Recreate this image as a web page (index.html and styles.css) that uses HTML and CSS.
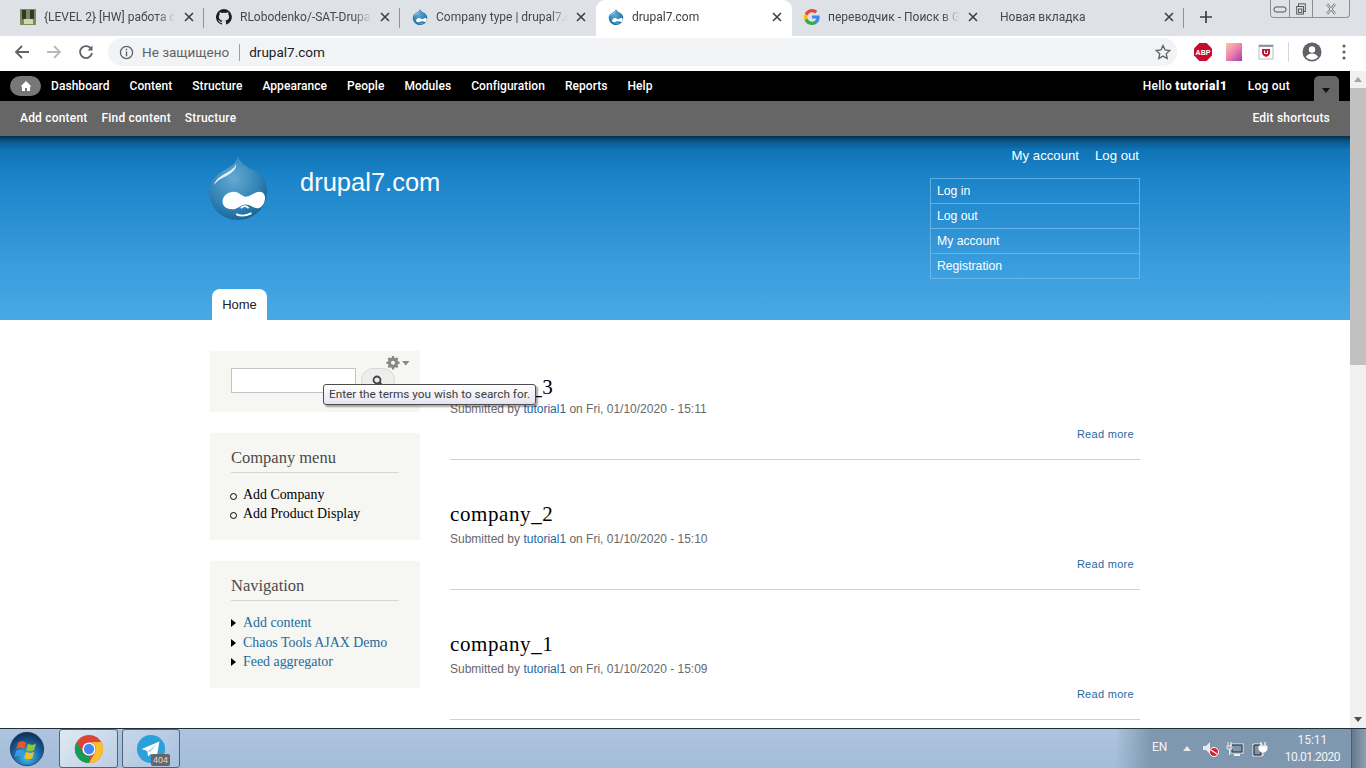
FILE: index.html
```html
<!DOCTYPE html>
<html lang="en">
<head>
<meta charset="utf-8">
<title>drupal7.com</title>
<link rel="stylesheet" href="styles.css">
</head>
<body>
<svg class="defs" width="0" height="0" aria-hidden="true">
  <defs>
    <radialGradient id="dropFill" cx="0.42" cy="0.35" r="0.72">
      <stop offset="0" stop-color="#64a9d2"/>
      <stop offset="0.65" stop-color="#2f80b4"/>
      <stop offset="1" stop-color="#14608f"/>
    </radialGradient>
    <symbol id="drop" viewBox="0 0 60 66">
      <path d="M30 0C29 8 20 12 12 17 4 22 0 29 0 36c0 17 13 30 30 30s30-13 30-30c0-8-4-15-11-20C40 12 32 8 30 0z" fill="url(#dropFill)"/>
      <path d="M28 8c-1 6-12 10-17 14-3 2-5 5-6 8 3-4 7-7 12-9 6-3 12-7 11-13z" fill="#e4f0f7"/>
      <path d="M14 47c0-6 6-10 12-10 5 0 8 5 12 5 5 0 9-5 14-5 4 0 6 3 6 6 0 6-4 11-8 11-4 0-7-4-12-4-5 0-8 5-14 5-6 0-10-3-10-8z" fill="#fff"/>
      <path d="M28 60c4 2 10 2 16-1M33 54c2-3 6-3 8 0" fill="none" stroke="#fff" stroke-width="1.800"/>
    </symbol>
    <symbol id="close" viewBox="0 0 10 10">
      <path d="M1 1l8 8M9 1L1 9" stroke="#3c4043" stroke-width="1.6" fill="none"/>
    </symbol>
  </defs>
</svg>

<header class="browser">
  <div class="tabstrip">
    <div class="tab">
      <svg class="favicon" viewBox="0 0 16 16"><rect width="16" height="16" fill="#7c8a5f"/><rect x="2" y="1" width="4" height="9" fill="#2d3a2a"/><rect x="10" y="1" width="4" height="9" fill="#2d3a2a"/><rect x="4" y="10" width="9" height="5" fill="#d8d3a8"/></svg>
      <span class="tab-label">{LEVEL 2} [HW] работа с</span>
      <svg class="tab-close"><use href="#close"/></svg>
    </div>
    <div class="tab">
      <svg class="favicon" viewBox="0 0 16 16"><path fill="#1b1f23" d="M8 0a8 8 0 0 0-2.5 15.6c.4.1.5-.2.5-.4v-1.4c-2.2.5-2.7-1-2.7-1-.4-.9-.9-1.200-.9-1.200-.7-.5.100-.5.100-.5.800.1 1.200.8 1.200.8.700 1.200 1.900.9 2.300.7.100-.5.300-.9.500-1.100-1.800-.2-3.600-.9-3.600-4 0-.9.300-1.600.800-2.100-.1-.2-.4-1 .1-2.100 0 0 .7-.2 2.200.8a7.600 7.600 0 0 1 4 0c1.500-1 2.200-.8 2.200-.8.400 1.100.200 1.900.100 2.100.5.600.8 1.300.8 2.100 0 3.100-1.900 3.700-3.700 3.900.3.300.6.800.6 1.500v2.200c0 .2.100.5.600.4A8 8 0 0 0 8 0z"/></svg>
      <span class="tab-label">RLobodenko/-SAT-Drupal</span>
      <svg class="tab-close"><use href="#close"/></svg>
    </div>
    <div class="tab">
      <svg class="favicon"><use href="#drop"/></svg>
      <span class="tab-label">Company type | drupal7.com</span>
      <svg class="tab-close"><use href="#close"/></svg>
    </div>
    <div class="tab tab-active">
      <svg class="favicon"><use href="#drop"/></svg>
      <span class="tab-label">drupal7.com</span>
      <svg class="tab-close"><use href="#close"/></svg>
    </div>
    <div class="tab tab-nosep">
      <svg class="favicon" viewBox="0 0 16 16">
        <path fill="#4285f4" d="M15.700 8.200c0-.6-.1-1.100-.2-1.600H8v3h4.300c-.2 1-.8 1.800-1.600 2.400v2h2.600c1.500-1.400 2.400-3.400 2.400-5.800z"/>
        <path fill="#34a853" d="M8 16c2.200 0 4-.7 5.300-2l-2.600-2c-.7.500-1.600.8-2.700.8-2.100 0-3.900-1.400-4.500-3.300H.6v2.100A8 8 0 0 0 8 16z"/>
        <path fill="#fbbc05" d="M3.500 9.500a4.800 4.800 0 0 1 0-3V4.400H.9a8 8 0 0 0 0 7.200z"/>
        <path fill="#ea4335" d="M8 3.200c1.200 0 2.200.4 3 1.200l2.300-2.300A8 8 0 0 0 .9 4.400l2.600 2.100C4.100 4.600 5.900 3.200 8 3.200z"/>
      </svg>
      <span class="tab-label">переводчик - Поиск в Google</span>
      <svg class="tab-close"><use href="#close"/></svg>
    </div>
    <div class="tab tab-plain">
      <span class="tab-label">Новая вкладка</span>
      <svg class="tab-close"><use href="#close"/></svg>
    </div>
    <svg class="newtab" viewBox="0 0 12 12"><path d="M6 0v12M0 6h12" stroke="#3c4043" stroke-width="1.700"/></svg>
    <div class="winctl">
      <span class="winbtn"><svg viewBox="0 0 14 10"><rect x="1" y="3" width="12" height="5" rx="2" fill="none" stroke="#555"/></svg></span>
      <span class="winbtn winbtn-mid"><svg viewBox="0 0 14 14"><rect x="4" y="1" width="8" height="9" fill="none" stroke="#444"/><rect x="2" y="4" width="8" height="9" fill="#dee1e6" stroke="#444"/><rect x="4" y="7" width="4" height="4" fill="none" stroke="#444"/></svg></span>
      <span class="winbtn winbtn-x"><svg viewBox="0 0 14 12"><path d="M3 1l8 10M11 1L3 11" stroke="#777" stroke-width="2.400"/><path d="M3 1l8 10M11 1L3 11" stroke="#eee" stroke-width="1"/></svg></span>
    </div>
  </div>
  <div class="navbar">
    <svg class="navicon" viewBox="0 0 16 16"><path d="M15 8H2M8 2L2 8l6 6" fill="none" stroke="#5f6368" stroke-width="1.800"/></svg>
    <svg class="navicon" viewBox="0 0 16 16"><path d="M1 8h13M8 2l6 6-6 6" fill="none" stroke="#b7babd" stroke-width="1.800"/></svg>
    <svg class="navicon" viewBox="0 0 16 16"><path d="M13.500 5.500A6 6 0 1 0 14 9" fill="none" stroke="#5f6368" stroke-width="1.800"/><path d="M14.500 1.500v5h-5z" fill="#5f6368"/></svg>
    <div class="omnibox">
      <svg class="info" viewBox="0 0 16 16"><circle cx="8" cy="8" r="6.500" fill="none" stroke="#5f6368" stroke-width="1.400"/><path d="M8 7v5M8 4v1.600" stroke="#5f6368" stroke-width="1.500"/></svg>
      <span class="insecure">Не защищено</span>
      <span class="omni-sep"></span>
      <span class="url">drupal7.com</span>
      <svg class="star" viewBox="0 0 16 16"><path d="M8 1.500l2 4.500 4.800.5-3.600 3.200 1 4.800L8 12.100l-4.200 2.400 1-4.800L1.200 6.500 6 6z" fill="none" stroke="#5f6368" stroke-width="1.300"/></svg>
    </div>
    <div class="ext-row">
      <span class="abp">ABP</span>
      <span class="ext-grad"></span>
      <svg class="ext-shield" viewBox="0 0 16 16"><rect x="1" y="1" width="14" height="14" fill="#fff" stroke="#b8bcc0"/><rect x="1" y="1" width="14" height="2" fill="#90969c"/><path d="M4 5h8v4c0 2-2 3-4 4-2-1-4-2-4-4z" fill="#c0162c"/><path d="M6.500 6.500v3h3v-3" fill="none" stroke="#fff"/></svg>
      <span class="ext-sep"></span>
      <svg class="avatar" viewBox="0 0 20 20"><circle cx="10" cy="10" r="9.500" fill="#5f6368"/><circle cx="10" cy="7.500" r="3.200" fill="#fff"/><path d="M3.800 15c1.500-2.500 3.800-3.500 6.200-3.500s4.700 1 6.200 3.500a8 8 0 0 1-12.400 0z" fill="#fff"/></svg>
      <svg class="kebab" viewBox="0 0 4 16"><circle cx="2" cy="2" r="1.600" fill="#5f6368"/><circle cx="2" cy="8" r="1.600" fill="#5f6368"/><circle cx="2" cy="14" r="1.600" fill="#5f6368"/></svg>
    </div>
  </div>
</header>

<div class="viewport">
  <div class="page">
    <nav class="admin-bar">
      <span class="home-pill"><svg viewBox="0 0 12 12"><path d="M6 1L0.500 6.500H2V11h3V8h2v3h3V6.500h1.500z" fill="#fff"/></svg></span>
      <ul class="admin-menu">
        <li>Dashboard</li><li>Content</li><li>Structure</li><li>Appearance</li><li>People</li><li>Modules</li><li>Configuration</li><li>Reports</li><li>Help</li>
      </ul>
      <span class="admin-user">Hello <b>tutorial1</b></span>
      <span class="admin-logout">Log out</span>
      <span class="admin-toggle"><i></i></span>
    </nav>
    <nav class="shortcut-bar">
      <ul class="shortcut-menu"><li>Add content</li><li>Find content</li><li>Structure</li></ul>
      <span class="edit-shortcuts">Edit shortcuts</span>
    </nav>

    <header class="site-header">
      <div class="wrap header-inner">
        <div class="brand">
          <svg class="logo"><use href="#drop"/></svg>
          <span class="site-name">drupal7.com</span>
        </div>
        <div class="header-right">
          <div class="secondary"><span>My account</span><span>Log out</span></div>
          <ul class="user-menu"><li>Log in</li><li>Log out</li><li>My account</li><li>Registration</li></ul>
        </div>
      </div>
      <div class="wrap tabs-row"><span class="home-tab">Home</span></div>
    </header>

    <div class="wrap columns">
      <aside class="sidebar">
        <section class="block block-search">
          <input class="search-input" type="text" aria-label="Search">
          <span class="search-btn"><svg viewBox="0 0 12 12"><circle cx="5" cy="5" r="3.500" fill="none" stroke="#444" stroke-width="1.800"/><path d="M7.500 7.500l3 3" stroke="#444" stroke-width="2"/></svg></span>
          <span class="gear"><svg viewBox="0 0 24 14"><path fill="#888" d="M6 0h2l.3 1.700 1.300.5L11 1.300l1.400 1.400-.9 1.400.5 1.300 1.700.3v2l-1.700.3-.5 1.300.9 1.400L11 12.100l-1.400-.9-1.300.5L8 13.400H6l-.3-1.700-1.300-.5-1.400.9L1.600 10.700l.9-1.400L2 8l-1.700-.3v-2L2 5.400l.5-1.300-.9-1.400L3 1.300l1.400.9 1.300-.5zM7 4.700a2 2 0 1 0 0 4 2 2 0 0 0 0-4z"/><path fill="#888" d="M16 5h7.500l-3.750 4.500z"/></svg></span>
          <div class="tooltip">Enter the terms you wish to search for.</div>
        </section>
        <section class="block">
          <h2 class="block-title">Company menu</h2>
          <ul class="block-list list-circle"><li>Add Company</li><li>Add Product Display</li></ul>
        </section>
        <section class="block">
          <h2 class="block-title">Navigation</h2>
          <ul class="block-list list-tri"><li>Add content</li><li>Chaos Tools AJAX Demo</li><li>Feed aggregator</li></ul>
        </section>
      </aside>
      <main class="content">
        <article class="post">
          <h2 class="post-title">company_3</h2>
          <p class="submitted">Submitted by <a class="author">tutorial1</a> on Fri, 01/10/2020 - 15:11</p>
          <p class="more"><a>Read more</a></p>
        </article>
        <article class="post">
          <h2 class="post-title">company_2</h2>
          <p class="submitted">Submitted by <a class="author">tutorial1</a> on Fri, 01/10/2020 - 15:10</p>
          <p class="more"><a>Read more</a></p>
        </article>
        <article class="post">
          <h2 class="post-title">company_1</h2>
          <p class="submitted">Submitted by <a class="author">tutorial1</a> on Fri, 01/10/2020 - 15:09</p>
          <p class="more"><a>Read more</a></p>
        </article>
      </main>
    </div>
  </div>
  <div class="scrollbar">
    <span class="sb-arrow"></span>
    <span class="sb-thumb"></span>
    <span class="sb-track"></span>
    <span class="sb-arrow sb-arrow-down"></span>
  </div>
</div>

<footer class="taskbar">
  <div class="orb">
    <svg viewBox="0 0 40 40">
      <defs><radialGradient id="orbFill" cx="0.5" cy="0.75" r="0.7"><stop offset="0" stop-color="#3fc4ee"/><stop offset="0.6" stop-color="#1a5f9e"/><stop offset="1" stop-color="#10335a"/></radialGradient></defs>
      <circle cx="20" cy="20" r="18.500" fill="url(#orbFill)" stroke="#24405e"/>
      <path d="M10 13c3-2 6-2 9 0l-2 7c-3-2-6-2-9 0z" fill="#e8562a"/>
      <path d="M21 14c3 2 6 2 9 0l-2 7c-3 2-6 2-9 0z" fill="#8cc63e"/>
      <path d="M8 22c3-2 6-2 9 0l-2 7c-3-2-6-2-9 0z" fill="#3a9be0"/>
      <path d="M19 23c3 2 6 2 9 0l-2 7c-3 2-6 2-9 0z" fill="#f7bd1d"/>
    </svg>
  </div>
  <div class="task-btn">
    <svg viewBox="0 0 32 32">
      <circle cx="16" cy="16" r="15" fill="#db4437"/>
      <path d="M16 31a15 15 0 0 1-13-22.500L9.500 20A7.500 7.500 0 0 0 16 23.500z" fill="#0f9d58"/>
      <path d="M16 8.500h13A15 15 0 0 1 16 31l6.500-11.500A7.500 7.500 0 0 0 16 8.500z" fill="#fbc02d"/>
      <circle cx="16" cy="16" r="7" fill="#fff"/><circle cx="16" cy="16" r="5.500" fill="#4285f4"/>
    </svg>
  </div>
  <div class="task-btn task-btn-tg">
    <svg viewBox="0 0 32 32"><circle cx="16" cy="16" r="15" fill="#2aa1da"/><path d="M6 16l19-8-3 17-6-4-3 3-1-6z" fill="#fff"/><path d="M12 18l10-7-7 9z" fill="#c8daea"/></svg>
    <span class="badge">404</span>
  </div>
  <div class="tray">
    <span class="lang">EN</span>
    <span class="tray-up"></span>
    <svg class="tray-icon" viewBox="0 0 18 16"><path d="M1 5h3l4-4v12l-4-4H1z" fill="#e8e8e8"/><circle cx="12" cy="11" r="4.500" fill="#d8202a" stroke="#fff"/><path d="M9 9l6 4" stroke="#fff" stroke-width="1.300"/></svg>
    <svg class="tray-icon" viewBox="0 0 18 16"><rect x="5" y="3" width="12" height="9" fill="#8297ac" stroke="#f4f4f4"/><rect x="6" y="4" width="10" height="7" fill="none" stroke="#1f2d3b"/><path d="M8 14h6" stroke="#eee" stroke-width="2"/><path d="M2 1v4M5 1v4M1 5h5v3H1zM3.500 8v6" stroke="#eee" fill="none"/></svg>
    <svg class="tray-icon" viewBox="0 0 18 16"><path d="M3 3h9v12H3z" fill="#7e94aa" stroke="#f0f0f0"/><path d="M4 4h7v10H4z" fill="none" stroke="#222"/><path d="M11 1v4M15 1v4" stroke="#eee" stroke-width="1.400"/><path d="M9 5h8v4l-2 2h-4l-2-2zM13 11v4" stroke="#eee" fill="#fff"/></svg>
    <div class="clock"><span>15:11</span><span>10.01.2020</span></div>
    <span class="show-desktop"></span>
  </div>
</footer>
</body>
</html>
```
FILE: styles.css
```css
* { box-sizing: border-box; }
html, body { margin: 0; padding: 0; height: 100%; overflow: hidden; }
body { display: flex; flex-direction: column; height: 768px; width: 1366px; font-family: "Liberation Sans", Arial, sans-serif; background: #fff; }
.defs { position: absolute; }
ul { list-style: none; margin: 0; padding: 0; }
h2, p { margin: 0; font-weight: normal; }

/* browser chrome */
.browser { flex: none; height: 71px; display: flex; flex-direction: column; }
.tabstrip { height: 36px; background: #dee1e6; display: flex; padding-left: 8px; align-items: stretch; position: relative; }
.tab { width: 196px; display: flex; align-items: center; padding: 0 10px 2px 12px; font: 12px Roboto, "Noto Sans", sans-serif; color: #45484c; position: relative; }
.tab::after { content: ""; position: absolute; right: 0; top: 8px; height: 20px; width: 1px; background: #8f9398; }
.tab-active { background: #fff; border-radius: 9px 9px 0 0; color: #3c4043; }
.tab-active::after, .tab-nosep::after { display: none; }
.tab:nth-child(3)::after { display: none; }
.favicon { width: 16px; height: 16px; flex: none; margin-right: 8px; }
.tab-label { flex: 1; white-space: nowrap; overflow: hidden; -webkit-mask-image: linear-gradient(to right, #000 85%, transparent 98%); mask-image: linear-gradient(to right, #000 85%, transparent 98%); }
.tab-close { width: 10px; height: 10px; flex: none; margin-left: 6px; }
.newtab { width: 12px; height: 12px; margin: 11px 0 0 16px; flex: none; }
.winctl { position: absolute; left: 1270px; top: 0; width: 80px; height: 18px; display: flex; border: 1px solid #8b8e92; border-top: 0; border-radius: 0 0 4px 4px; background: #dfe2e6; }
.winbtn { flex: 1; display: flex; align-items: center; justify-content: center; }
.winbtn svg { width: 14px; height: 12px; }
.winbtn-mid { flex: 0 0 24px; border-left: 1px solid #8b8e92; border-right: 1px solid #8b8e92; }
.winbtn-x { flex: 0 0 36px; }

.navbar { height: 35px; background: #fff; display: flex; align-items: center; padding: 0 0 3px 14px; }
.navicon { width: 16px; height: 16px; flex: none; margin-right: 16px; }
.omnibox { margin-left: -2px; width: 1069px; height: 28px; background: #f1f3f4; border-radius: 14px; display: flex; align-items: center; padding: 0 6px 0 11px; font: 13.500px Roboto, "Noto Sans", sans-serif; }
.info { width: 15px; height: 15px; flex: none; }
.insecure { color: #5f6368; margin-left: 8px; }
.omni-sep { width: 1px; height: 17px; background: #9aa0a6; margin: 0 9px 0 10px; }
.url { color: #202124; flex: 1; }
.star { width: 16px; height: 16px; margin-right: 0; flex: none; }
.ext-row { display: flex; align-items: center; margin-left: 17px; }
.abp { width: 18px; height: 18px; background: #c70d2c; color: #fff; font: bold 7px "Liberation Sans", sans-serif; display: flex; align-items: center; justify-content: center; clip-path: polygon(30% 0, 70% 0, 100% 30%, 100% 70%, 70% 100%, 30% 100%, 0 70%, 0 30%); }
.ext-grad { width: 16px; height: 18px; margin-left: 14px; background: linear-gradient(135deg, #f8c9a0 0%, #ee80b0 50%, #a03fb0 100%); }
.ext-shield { width: 16px; height: 18px; margin-left: 16px; }
.ext-sep { width: 1px; height: 20px; background: #d5d7da; margin: 0 13px 0 14px; }
.avatar { width: 20px; height: 20px; }
.kebab { width: 4px; height: 16px; margin-left: 20px; }

/* viewport */
.viewport { flex: 1; min-height: 0; display: flex; }
.page { flex: 1; min-width: 0; overflow: hidden; }
.scrollbar { flex: 0 0 16px; background: #f1f1f1; display: flex; flex-direction: column; }
.sb-arrow { flex: 0 0 17px; position: relative; }
.sb-arrow::after { content: ""; position: absolute; left: 4px; top: 6px; border-left: 4px solid transparent; border-right: 4px solid transparent; border-bottom: 5px solid #a3a3a3; }
.sb-arrow-down::after { top: 6px; border-bottom: 0; border-top: 5px solid #505050; }
.sb-thumb { flex: 0 0 277px; background: #c1c1c1; }
.sb-track { flex: 1; }

/* admin */
.admin-bar { height: 30px; background: #000; display: flex; align-items: center; color: #fff; font: 500 12px Roboto, "Noto Sans", sans-serif; letter-spacing: .05px; padding: 0 0 1px 10px; }
.home-pill { width: 31px; height: 20px; border-radius: 10px; background: #777; display: flex; align-items: center; justify-content: center; margin-right: 10px; }
.home-pill svg { width: 12px; height: 12px; }
.admin-menu { display: flex; gap: 20px; flex: 1; }
.admin-user b { font-weight: 900; letter-spacing: .7px; }
.admin-user { letter-spacing: .3px; }
.admin-logout { margin-left: 20px; letter-spacing: .25px; }
.admin-toggle { width: 25px; height: 25px; background: #666; border-radius: 5px 5px 0 0; margin: 5px 11px -1px 24px; align-self: stretch; position: relative; }
.admin-toggle i { position: absolute; left: 8px; top: 12px; border-left: 4px solid transparent; border-right: 4px solid transparent; border-top: 5px solid #111; }
.shortcut-bar { height: 35px; background: #666; display: flex; align-items: center; justify-content: space-between; color: #fff; font: 500 12px Roboto, "Noto Sans", sans-serif; letter-spacing: .2px; padding: 0 20px 1px; }
.shortcut-menu { display: flex; gap: 14px; }

/* header */
.site-header { height: 184px; background: linear-gradient(to bottom, #03304d 0, #0a5a90 6px, #0f74b6 14px, #1b83c9 40px, #3a9ddd 130px, #48a9e6 184px); display: flex; flex-direction: column; }
.wrap { width: 930px; margin-left: 210px; }
.header-inner { flex: 1; display: flex; justify-content: space-between; }
.brand { display: flex; align-items: flex-start; padding-top: 20px; }
.logo { width: 58px; height: 64px; flex: none; margin-left: -1px; }
.site-name { color: #fff; font-size: 25.500px; margin: 12px 0 0 33px; line-height: 28px; }
.header-right { width: 210px; color: #fff; }
.secondary { display: flex; justify-content: flex-end; gap: 16px; font-size: 13.200px; height: 42px; padding: 12px 1px 0 0; line-height: 16px; }
.user-menu { border: 1px solid rgba(130, 195, 240, .65); font-size: 12.200px; }
.user-menu li { height: 25px; line-height: 24px; padding-left: 6px; border-bottom: 1px solid rgba(130, 195, 240, .65); }
.user-menu li:last-child { height: 24px; border-bottom: 0; }
.tabs-row { height: 31px; flex: none; padding-left: 2px; }
.home-tab { display: block; width: 55px; height: 31px; background: #fff; border-radius: 8px 8px 0 0; font-size: 13px; line-height: 31px; text-align: center; color: #222; }

/* columns */
.columns { display: flex; gap: 30px; padding-top: 31px; }
.sidebar { width: 210px; flex: none; display: flex; flex-direction: column; gap: 21px; }
.block { background: #f6f6f2; padding: 15px 21px 16.900px; position: relative; font-family: "Liberation Serif", serif; }
.block-search { height: 61px; padding: 17px 0 0 21px; display: flex; gap: 5px; }
.search-input { width: 125px; height: 25px; border: 1px solid #c4c4c4; background: #fff; margin: 0; padding: 0; }
.search-btn { width: 34px; height: 25px; border-radius: 12px; border: 1px solid #d8d8d8; background: #ededed; display: flex; align-items: center; justify-content: center; }
.search-btn svg { width: 12px; height: 12px; }
.gear { position: absolute; left: 176px; top: 5px; width: 24px; height: 14px; display: block; }
.gear svg { width: 24px; height: 14px; display: block; }
.tooltip { position: absolute; z-index: 5; left: 113px; top: 33px; height: 21px; padding: 0 5px; border: 1px solid #4d4d4d; border-radius: 3px; background: linear-gradient(#fff, #e4e5f0); box-shadow: 2px 2px 2px rgba(0,0,0,.35); font: 11.800px/19px Roboto, "Noto Sans", sans-serif; color: #3c3c3c; white-space: nowrap; }
.block-title { font-size: 16.500px; line-height: 20px; color: #4a4a4a; padding-bottom: 4px; border-bottom: 1px solid #d6d6d0; margin-bottom: 11.600px; }
.block-list { font-size: 13.900px; line-height: 19.500px; color: #000; padding-left: 12px; }
.block-list li { position: relative; white-space: nowrap; }
.list-circle li::before { content: ""; position: absolute; left: -13px; top: 8px; width: 5px; height: 5px; border: 1.300px solid #000; border-radius: 50%; }
.list-tri { color: #1f6a9c; }
.list-tri li::before { content: ""; position: absolute; left: -12px; top: 6px; border-top: 4px solid transparent; border-bottom: 4px solid transparent; border-left: 5px solid #000; }

/* posts */
.content { flex: 1; min-width: 0; }
.post { height: 130px; padding-top: 42px; border-bottom: 1px solid #d0d0d0; }
.post:first-child { height: 109px; padding-top: 24px; }
.post:first-child .submitted { margin-top: 2px; }
.post-title { font: 21px/24px "Liberation Serif", serif; color: #000; letter-spacing: .6px; }
.submitted { font-size: 12px; line-height: 16px; margin-top: 5px; color: #68696b; }
.author { color: #1f6a9c; }
.more { font-size: 11px; line-height: 14px; margin-top: 10px; padding-right: 6px; text-align: right; color: #1f6a9c; letter-spacing: .3px; }

/* taskbar */
.taskbar { flex: none; height: 40px; display: flex; background: linear-gradient(#aec4de, #a4bcd9); border-top: 1px solid #1f2d3b; position: relative; padding-left: 9px; }
.orb { width: 36px; height: 39px; flex: none; margin-right: 14px; display: flex; align-items: center; }
.orb svg { width: 36px; height: 36px; display: block; }
.task-btn { width: 59px; height: 39px; flex: none; margin-right: 4px; border: 1px solid #4f6479; border-radius: 3px; background: linear-gradient(135deg, #dfe9f3, #bccee2); display: flex; align-items: center; justify-content: center; position: relative; }
.task-btn svg { width: 30px; height: 30px; }
.task-btn-tg { width: 58px; background: linear-gradient(135deg, #c7d7ea, #a9c1dd); }
.badge { position: absolute; left: 28px; top: 24px; background: #666; color: #ddd; font: 9px/12px "Liberation Sans", sans-serif; padding: 0 2px; border-radius: 2px; }
.tray { margin-left: auto; width: 251px; display: flex; align-items: center; background: linear-gradient(90deg, transparent 0, #7f97af 36px); color: #f2f5f8; font: 12px Roboto, "Noto Sans", sans-serif; padding-left: 37px; }
.lang { margin-right: 16px; margin-bottom: 4px; }
.tray-up { border-left: 4px solid transparent; border-right: 4px solid transparent; border-bottom: 5px solid #e8e8e8; margin-right: 11px; }
.tray-icon { width: 18px; height: 16px; margin-right: 6px; flex: none; }
.clock { display: flex; flex-direction: column; align-items: center; width: 66px; margin-left: 5px; line-height: 17px; font-size: 12px; }
.clock span + span { letter-spacing: -.5px; }
.show-desktop { width: 15px; height: 39px; margin-left: auto; background: linear-gradient(90deg, #66798b, #8d9fb1); border-left: 1px solid #4c5c6b; }
```
